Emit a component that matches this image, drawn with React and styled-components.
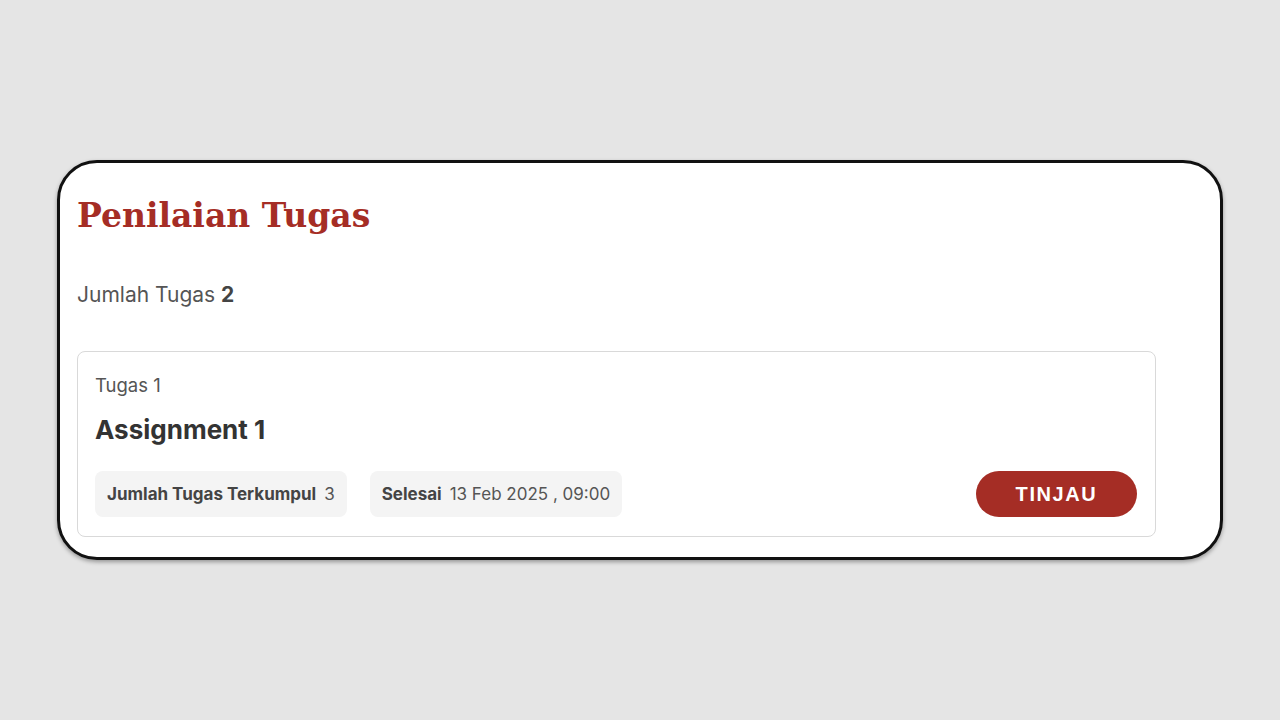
import React from 'react';
import styled, { createGlobalStyle } from 'styled-components';

const GlobalStyle = createGlobalStyle`
  body {
    margin: 0;
    background: #e5e5e5;
    font-family: Inter, "Noto Sans", sans-serif;
  }
`;

const Page = styled.div`
  min-height: 100vh;
  display: flex;
  align-items: center;
  justify-content: center;
`;

const Panel = styled.section`
  box-sizing: border-box;
  width: 1166px;
  background: #fff;
  border: 3px solid #111;
  border-radius: 40px;
  box-shadow: 0 2px 4px rgba(0, 0, 0, 0.35);
  padding: 30px 64px 20px 17px;
`;

const Title = styled.h1`
  margin: 0;
  font-family: "DejaVu Serif", serif;
  font-weight: bold;
  font-size: 33px;
  line-height: 46px;
  color: #a52d25;
`;

const Count = styled.p`
  margin: 43px 0 43px;
  font-size: 21px;
  line-height: 26px;
  color: #555;

  b {
    color: #444;
    font-weight: 700;
  }
`;

const TaskCard = styled.div`
  border: 1px solid #d9d9d9;
  border-radius: 8px;
  padding: 20px 18px 19px 17px;
`;

const TaskLabel = styled.div`
  font-size: 18.5px;
  line-height: 26px;
  color: #555;
`;

const TaskName = styled.h2`
  margin: 16px 0 25px;
  font-size: 26px;
  line-height: 32px;
  font-weight: 700;
  color: #333;
`;

const Footer = styled.div`
  display: flex;
  align-items: center;
  gap: 23px;
`;

const Chip = styled.div`
  height: 46px;
  display: flex;
  align-items: center;
  gap: 8px;
  padding: 0 12px;
  background: #f4f4f4;
  border-radius: 8px;
  font-size: 17px;
  color: #555;

  b {
    color: #444;
    font-weight: 700;
  }
`;

const ReviewButton = styled.button`
  margin-left: auto;
  width: 161px;
  height: 46px;
  border: none;
  border-radius: 23px;
  background: #a52d25;
  color: #fff;
  font-family: "Liberation Sans", Arial, sans-serif;
  font-weight: 700;
  font-size: 20px;
  letter-spacing: 1.6px;
  cursor: pointer;
`;

export default function App() {
  return (
    <>
      <GlobalStyle />
      <Page>
        <Panel>
          <Title>Penilaian Tugas</Title>
          <Count>
            Jumlah Tugas <b>2</b>
          </Count>
          <TaskCard>
            <TaskLabel>Tugas 1</TaskLabel>
            <TaskName>Assignment 1</TaskName>
            <Footer>
              <Chip>
                <b>Jumlah Tugas Terkumpul</b> 3
              </Chip>
              <Chip>
                <b>Selesai</b> 13 Feb 2025 , 09:00
              </Chip>
              <ReviewButton>TINJAU</ReviewButton>
            </Footer>
          </TaskCard>
        </Panel>
      </Page>
    </>
  );
}
